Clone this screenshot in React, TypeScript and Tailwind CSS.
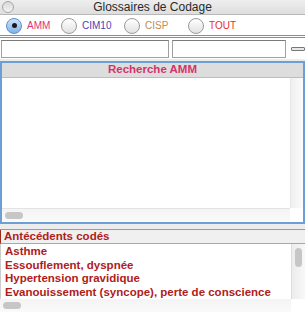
import React from 'react';

const font = { fontFamily: '"Liberation Sans", Arial, sans-serif' };

const Radio: React.FC<{ checked?: boolean; label: string; color: string }> = ({ checked, label, color }) => (
  <div className="flex items-center gap-[5px]">
    <div
      className={`w-[16px] h-[16px] rounded-full border flex items-center justify-center ${
        checked
          ? 'border-[#5a8fd0] bg-gradient-to-b from-[#cfe3f8] to-[#7fb2ea]'
          : 'border-[#9a9a9a] bg-gradient-to-b from-[#ffffff] to-[#e2e2e2]'
      }`}
    >
      {checked && <div className="w-[5px] h-[5px] rounded-full bg-[#1a1a1a]" />}
    </div>
    <span className={`text-[10px] ${color}`}>{label}</span>
  </div>
);

const HScroll: React.FC = () => (
  <div className="h-[13px] bg-gradient-to-b from-[#f4f4f4] to-[#fafafa] flex items-center pl-[3px]">
    <div className="w-[18px] h-[7px] rounded-full bg-[#c6c6c6]" />
  </div>
);

export default function App() {
  const items = [
    'Asthme',
    'Essouflement, dyspnée',
    'Hypertension gravidique',
    'Evanouissement (syncope), perte de conscience',
  ];
  return (
    <div className="w-[305px] h-[312px] bg-[#ececec] flex flex-col overflow-hidden" style={font}>
      {/* title bar */}
      <div className="h-[15px] relative flex items-center justify-center bg-gradient-to-b from-[#eeeeee] to-[#dedede] border-b border-[#b8b8b8]">
        <div className="absolute left-[2px] top-[1px] w-[12px] h-[12px] rounded-full border border-[#a8a8a8] bg-gradient-to-b from-[#d8d8d8] to-[#f4f4f4]" />
        <span className="text-[12px] text-[#2a2a2a] leading-none">Glossaires de Codage</span>
      </div>

      {/* radios */}
      <div className="h-[20px] bg-white flex items-center pl-[6px] pt-[1px]">
        <div className="w-[55px]"><Radio checked label="AMM" color="text-[#e0307a]" /></div>
        <div className="w-[63px]"><Radio label="CIM10" color="text-[#4a3fb8]" /></div>
        <div className="w-[64px]"><Radio label="CISP" color="text-[#c28a5a]" /></div>
        <div><Radio label="TOUT" color="text-[#ee2a2a]" /></div>
      </div>
      <div className="h-[3px] border-t border-b border-[#8c8c8c] bg-white" />

      {/* inputs */}
      <div className="h-[21px] bg-white flex items-center gap-[3px] pl-[1px]">
        <div className="w-[169px] h-[18px] border border-[#a0a0a0] border-t-[#7a7a7a] bg-white" />
        <div className="w-[115px] h-[18px] border border-[#a0a0a0] border-t-[#7a7a7a] bg-white" />
        <div className="ml-[2px] w-[14px] h-[4px] border border-[#777] rounded-[1px] bg-[#e8e8e8]" />
      </div>

      {/* recherche panel */}
      <div className="mt-[2px] h-[163px] border-2 border-[#6d9fd6] bg-white flex flex-col">
        <div className="h-[15px] bg-[#dddddd] border-b border-[#bdbdbd] flex items-center justify-center">
          <span className="text-[11.5px] font-bold text-[#d4336c]">Recherche AMM</span>
        </div>
        <div className="flex-1 flex">
          <div className="flex-1" />
          <div className="w-[13px] bg-gradient-to-r from-[#f0f0f0] to-[#fbfbfb] border-l border-[#e6e6e6]" />
        </div>
        <div className="flex">
          <div className="flex-1 border-t border-[#e4e4e4]"><HScroll /></div>
          <div className="w-[13px] bg-white" />
        </div>
      </div>

      {/* antecedents */}
      <div className="mt-[5px] flex-1 flex flex-col border-t border-[#9a9a9a] bg-white">
        <div className="h-[14px] bg-[#f0f0f0] border-b border-[#a8a8a8] border-l border-l-[#9a2a1a] flex items-center pl-[3px]">
          <span className="text-[11.5px] font-bold text-[#b0201a] leading-none">Antécédents codés</span>
        </div>
        <div className="flex h-[55px]">
          <div className="flex-1 pl-[4px] pt-[1px] overflow-hidden border-l border-[#ccc]">
            {items.map((it) => (
              <div key={it} className="h-[13.7px] text-[11.5px] font-bold text-[#b0201a] leading-[13.7px] whitespace-nowrap">
                {it}
              </div>
            ))}
          </div>
          <div className="w-[14px] bg-gradient-to-r from-[#ececec] to-[#f8f8f8] border-l border-[#ddd] flex justify-center pt-[4px]">
            <div className="w-[7px] h-[19px] rounded-full bg-[#c6c6c6]" />
          </div>
        </div>
        <div className="flex">
          <div className="flex-1"><HScroll /></div>
          <div className="w-[14px] bg-white" />
        </div>
        <div className="flex-1 bg-[#ececec]" />
      </div>
    </div>
  );
}
